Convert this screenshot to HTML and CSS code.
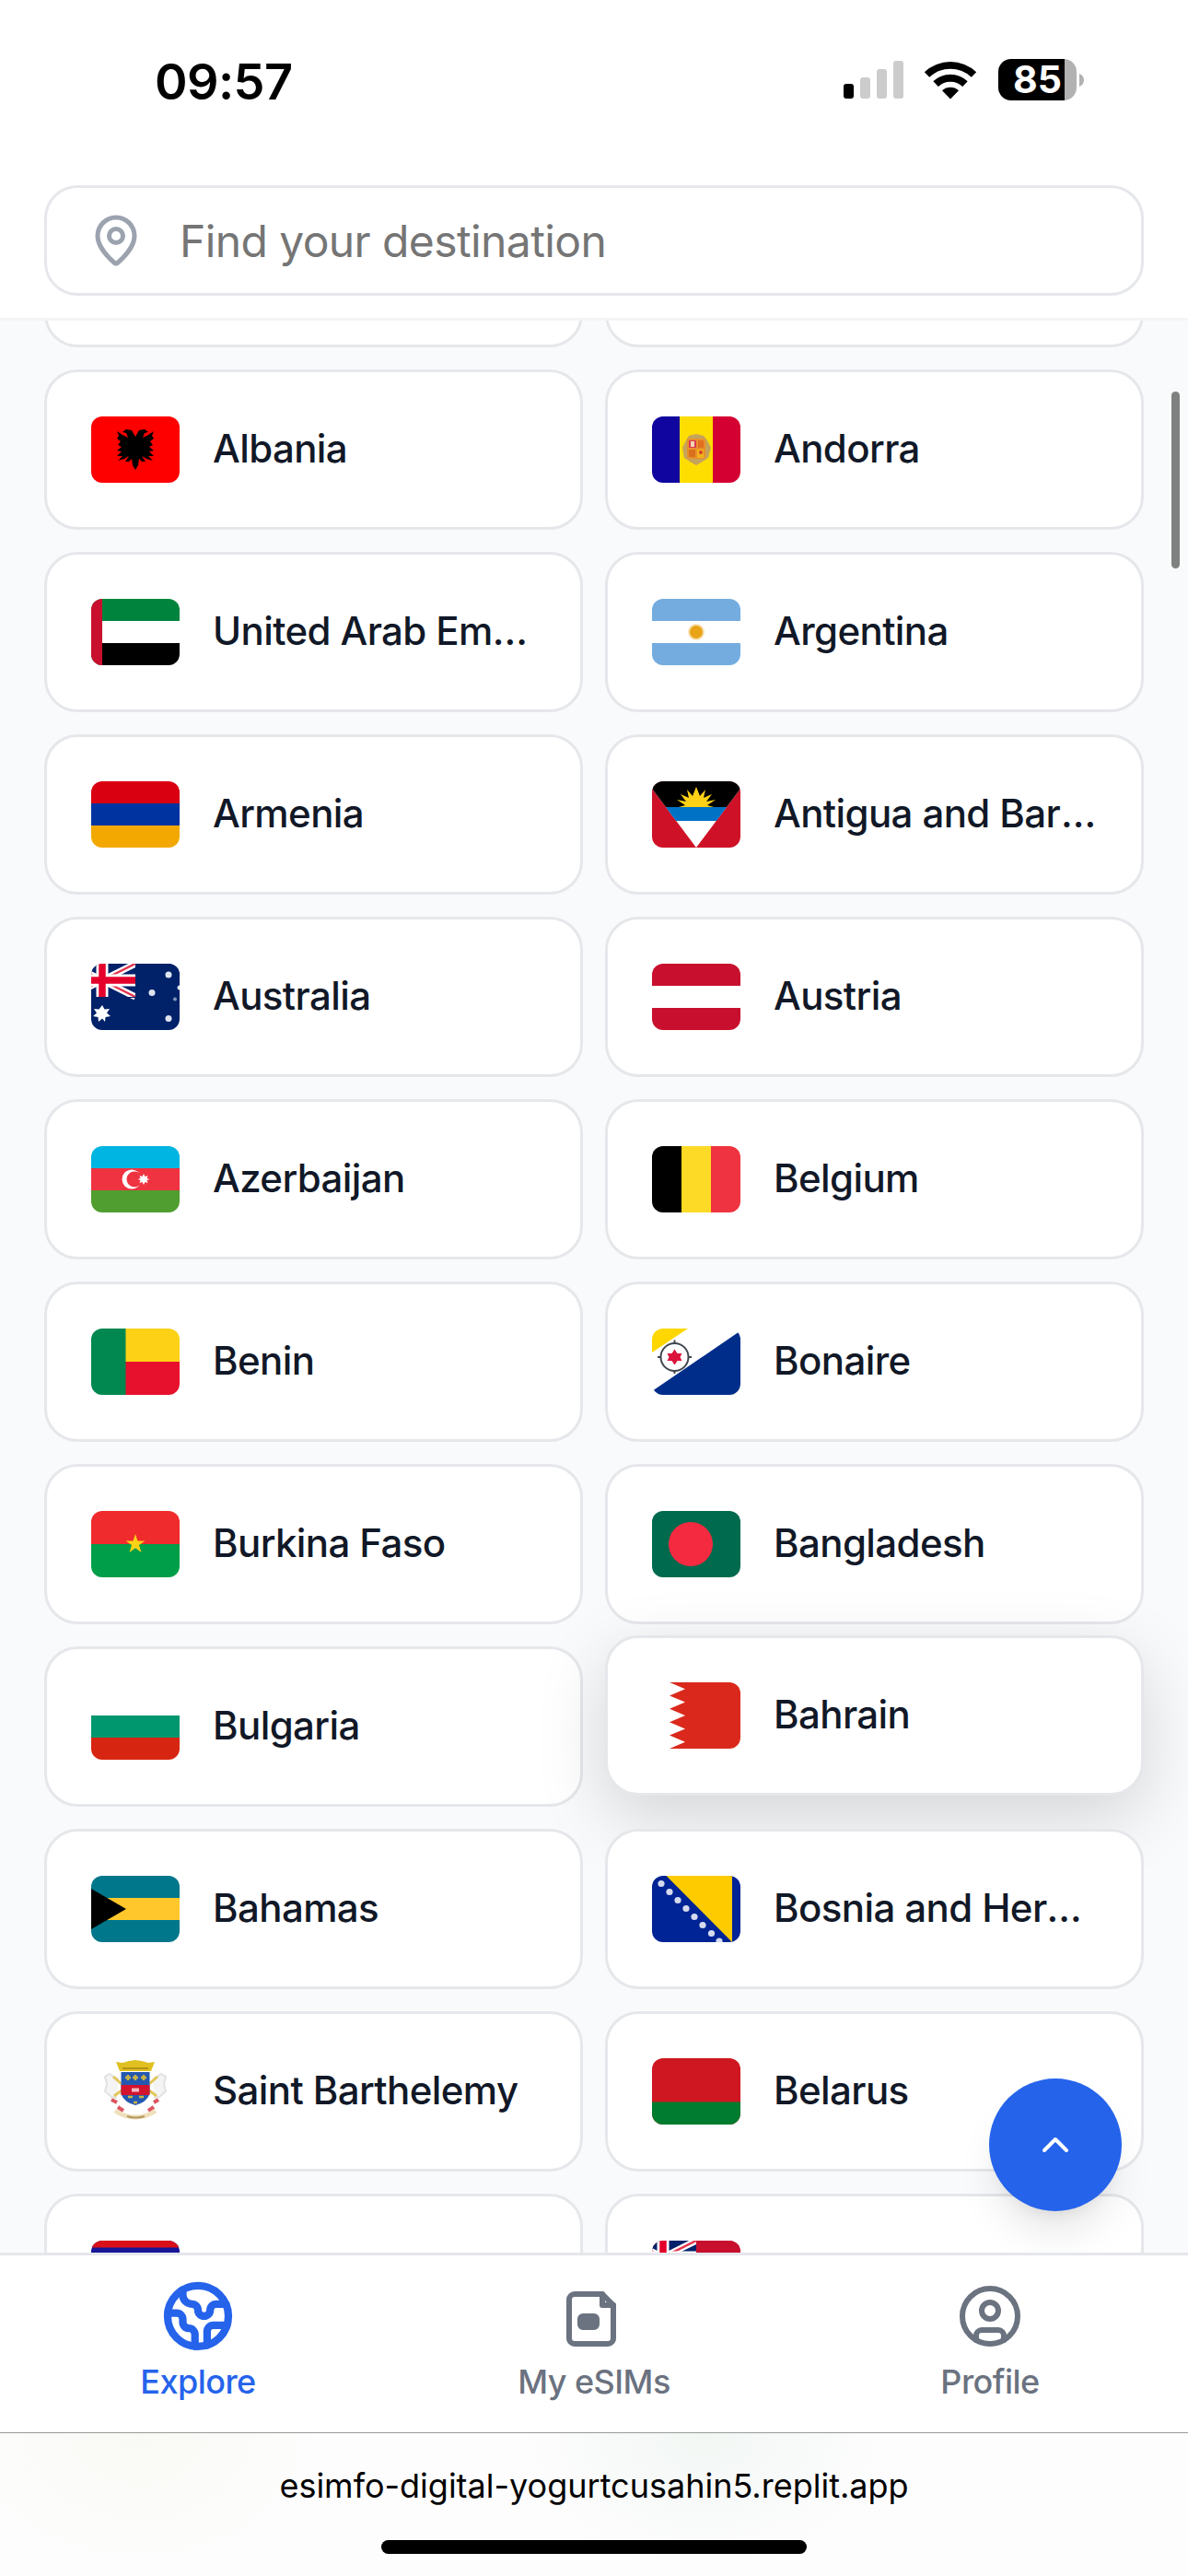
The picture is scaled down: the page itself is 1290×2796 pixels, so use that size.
FILE: index.html
```html
<!DOCTYPE html>
<html lang="en">
<head>
<meta charset="utf-8">
<title>Explore eSIM destinations</title>
<link rel="stylesheet" href="styles.css">
</head>
<body>
<div class="screen">
  <div class="status-bar">
    <span class="clock">09:57</span>
    <div class="status-icons">
      <svg class="signal" viewBox="0 0 65 41"><rect x="0" y="25" width="11" height="16" rx="3" fill="#000"/><rect x="18" y="18" width="11" height="23" rx="3" fill="#ccc"/><rect x="36" y="9" width="11" height="32" rx="3" fill="#ccc"/><rect x="54" y="0" width="11" height="41" rx="3" fill="#ccc"/></svg>
      <svg class="wifi" viewBox="0 0 58 42"><path d="M0.8 12.3A41 41 0 0 1 57.2 12.3L51.8 17.8A33 33 0 0 0 6.2 17.8Z"/><path d="M10.3 22.3A27 27 0 0 1 47.7 22.3L42.2 27.9A19.5 19.5 0 0 0 15.8 27.9Z"/><path d="M20 32.3A13.5 13.5 0 0 1 38 32.3L29 41.5Z"/></svg>
      <div class="battery"><span class="battery-level">85</span></div>
      <svg class="battery-nub" viewBox="0 0 5 14"><path d="M0 0Q5 2 5 7T0 14Z" fill="#b2b2b2"/></svg>
    </div>
  </div>
  <header class="search-header">
    <div class="search">
      <svg class="pin" viewBox="0 0 24 24"><path d="M20 10c0 4.993-5.539 10.193-7.399 11.799a1 1 0 0 1-1.202 0C9.539 20.193 4 14.993 4 10a8 8 0 0 1 16 0"/><circle cx="12" cy="10" r="3"/></svg>
      <span class="placeholder">Find your destination</span>
    </div>
  </header>

  <main class="content">
    <div class="grid">
      <div class="card"></div>
      <div class="card"></div>

      <div class="card"><svg class="flag" viewBox="0 0 96 72"><rect width="96" height="72" fill="#f00"/><path d="M48 22L44 15 38 14 34 17 38 18 40 23 34 20 28 16 30 21 28 24 32 27 29 31 33 33 28 37 33 38 28 43 34 43 29 48 36 46 41 43 37 49 41 49 44 46 45 53 48 58 51 53 52 46 55 49 59 49 55 43 60 46 67 48 62 43 68 43 63 38 68 37 63 33 67 31 64 27 68 24 66 21 68 16 62 20 56 23 58 18 62 17 58 14 52 15Z"/></svg><span class="name">Albania</span></div>
      <div class="card"><svg class="flag" viewBox="0 0 96 72"><rect width="30" height="72" fill="#10069f"/><rect x="30" width="36" height="72" fill="#fedd00"/><rect x="66" width="30" height="72" fill="#d50032"/><path d="M37 26L40 21 48 19 56 21 60 26 64 34 61 45 55 49 48 53 41 49 35 45 33 34Z" fill="#c6a35a"/><rect x="38" y="24" width="20" height="22" rx="3" fill="#e8902a"/><rect x="40" y="26" width="8" height="8" fill="#d83a55"/><rect x="42" y="27" width="4" height="6" fill="#f5d5b0"/><rect x="50" y="26" width="6" height="8" fill="#e07020"/><rect x="40" y="36" width="7" height="8" fill="#d9701d"/><rect x="49" y="36" width="7" height="9" fill="#f2b21c"/><circle cx="53" cy="39" r="2" fill="#d7402e"/></svg><span class="name">Andorra</span></div>

      <div class="card"><svg class="flag" viewBox="0 0 96 72"><rect width="96" height="72" fill="#fff"/><rect width="96" height="24" fill="#00843d"/><rect y="48" width="96" height="24"/><rect width="12" height="72" fill="#c8102e"/></svg><span class="name">United Arab Emirates</span></div>
      <div class="card"><svg class="flag" viewBox="0 0 96 72"><rect width="96" height="72" fill="#74acdf"/><rect y="24" width="96" height="24" fill="#fff"/><circle cx="48" cy="36" r="9" fill="#f8dfae"/><circle cx="48" cy="36" r="7" fill="#e8a317"/></svg><span class="name">Argentina</span></div>

      <div class="card"><svg class="flag" viewBox="0 0 96 72"><rect width="96" height="24" fill="#d90012"/><rect y="24" width="96" height="24" fill="#0033a0"/><rect y="48" width="96" height="24" fill="#f2a800"/></svg><span class="name">Armenia</span></div>
      <div class="card"><svg class="flag" viewBox="0 0 96 72"><rect width="96" height="72" fill="#ce1126"/><path d="M0 0H96V8L48 72 0 8Z" fill="#fff"/><path d="M0 0H96V8L81 28H15L0 8Z"/><path d="M15 28H81L70 43H26Z" fill="#0072c6"/><path d="M29 28L36 26 27 20 37 22 31 14 40 18 38 9 44 16 48 6 52 16 58 9 56 18 65 14 59 22 69 20 60 26 67 28Z" fill="#fcd116"/></svg><span class="name">Antigua and Barbuda</span></div>

      <div class="card"><svg class="flag" viewBox="0 0 96 72"><rect width="96" height="72" fill="#012169"/><g id="jack"><path d="M-24 0L48 36M48 0L-24 36" stroke="#fff" stroke-width="7"/><path d="M12 18L48 36M12 18L48 0M12 18L-24 0M12 18L-24 36" stroke="#e4344f" stroke-width="2.5"/><path d="M12 0V36M0 18H48" stroke="#fff" stroke-width="13"/><path d="M12 0V36M0 18H48" stroke="#e4002b" stroke-width="7.5"/></g><rect x="48" width="48" height="37" fill="#012169"/><path d="M-12 36.5H48" stroke="#012169" stroke-width="1"/><path d="M12 45l2.5 4.500 5.500-.5-3 4.500 4 3.500-5.500 1-.5 5-3-3.500-4 3.500-.5-5-5.500-1 4-3.500-3-4.500 5.500.5z" fill="#fff"/><g fill="#dfe4ef"><circle cx="84" cy="12" r="3.500"/><circle cx="66" cy="31.500" r="3.500"/><circle cx="84" cy="59.500" r="3.500"/><circle cx="96" cy="26" r="2.500"/><circle cx="91" cy="38.500" r="2" opacity=".6"/></g></svg><span class="name">Australia</span></div>
      <div class="card"><svg class="flag" viewBox="0 0 96 72"><rect width="96" height="72" fill="#c8102e"/><rect y="24" width="96" height="24" fill="#fff"/></svg><span class="name">Austria</span></div>

      <div class="card"><svg class="flag" viewBox="0 0 96 72"><rect width="96" height="24" fill="#00b5e2"/><rect y="24" width="96" height="24" fill="#ef3340"/><rect y="48" width="96" height="24" fill="#509e2f"/><circle cx="44" cy="36" r="10.500" fill="#fff"/><circle cx="47" cy="36" r="8.500" fill="#ef3340"/><path d="M57 30l1.500 3 3-1-1 3 3 1-3 1 1 3-3-1-1.500 3-1.500-3-3 1 1-3-3-1 3-1-1-3 3 1z" fill="#fff"/></svg><span class="name">Azerbaijan</span></div>
      <div class="card"><svg class="flag" viewBox="0 0 96 72"><rect width="32" height="72"/><rect x="32" width="32" height="72" fill="#fdda25"/><rect x="64" width="32" height="72" fill="#ef3340"/></svg><span class="name">Belgium</span></div>

      <div class="card"><svg class="flag" viewBox="0 0 96 72"><rect width="38" height="72" fill="#008850"/><rect x="37.500" width="59" height="36" fill="#fcd116"/><rect x="37.500" y="36" width="59" height="36" fill="#e8112d"/></svg><span class="name">Benin</span></div>
      <div class="card"><svg class="flag" viewBox="0 0 96 72"><rect width="96" height="72" fill="#fff"/><path d="M0 0H39L0 26Z" fill="#ffd700"/><path d="M96 2.500V72H0V68Z" fill="#012d8a"/><circle cx="24.500" cy="31" r="15" fill="#fff" stroke="#40464f" stroke-width="2"/><path d="M24.500 12.500v3M24.500 46v3M6 31h3M40 31h3" stroke="#40464f" stroke-width="2"/><path d="M24.500 22.500l3 4.500h5l-2 4 2 4h-5l-3 4.500-3-4.500h-5l2-4-2-4h5z" fill="#dc143c"/></svg><span class="name">Bonaire</span></div>

      <div class="card"><svg class="flag" viewBox="0 0 96 72"><rect width="96" height="36" fill="#ef2b2d"/><rect y="36" width="96" height="36" fill="#009e49"/><path d="M48 25l2.500 7.500H58.500l-6.500 4.500 2.500 8-6.500-4.800-6.500 4.800 2.500-8-6.500-4.500h8z" fill="#fcd116"/></svg><span class="name">Burkina Faso</span></div>
      <div class="card"><svg class="flag" viewBox="0 0 96 72"><rect width="96" height="72" fill="#006a4e"/><circle cx="42" cy="36" r="24" fill="#f42a41"/></svg><span class="name">Bangladesh</span></div>

      <div class="card"><svg class="flag" viewBox="0 0 96 72"><rect width="96" height="72" fill="#fff"/><rect y="24" width="96" height="24" fill="#00966e"/><rect y="48" width="96" height="24" fill="#d62612"/></svg><span class="name">Bulgaria</span></div>
      <div class="card card-raised"><svg class="flag" viewBox="0 0 96 72"><rect width="96" height="72" fill="#fff"/><path d="M96 0H19L36 7.200 19 14.400 36 21.600 19 28.800 36 36 19 43.200 36 50.400 19 57.600 36 64.800 19 72H96Z" fill="#da291c"/></svg><span class="name">Bahrain</span></div>

      <div class="card"><svg class="flag" viewBox="0 0 96 72"><rect width="96" height="72" fill="#00778b"/><rect y="24" width="96" height="24" fill="#ffc72c"/><path d="M0 14L38 36 0 58Z"/></svg><span class="name">Bahamas</span></div>
      <div class="card"><svg class="flag" viewBox="0 0 96 72"><rect width="96" height="72" fill="#002395"/><path d="M15.500 0H87V72Z" fill="#fecb00"/><g fill="#d5dbee"><circle cx="10" cy="8.500" r="3.600"/><circle cx="19" cy="17.500" r="3.600"/><circle cx="28" cy="26.500" r="3.600"/><circle cx="37" cy="35.500" r="3.600"/><circle cx="46" cy="44.500" r="3.600"/><circle cx="55" cy="53.500" r="3.600"/><circle cx="64.500" cy="62.500" r="3.600"/><circle cx="73" cy="71" r="3.600"/></g></svg><span class="name">Bosnia and Herzegovina</span></div>

      <div class="card"><svg class="flag" viewBox="0 0 96 72"><rect width="96" height="72" fill="#fff"/><path d="M30 23L20 17 15 20 17 28 15 36 22 42 28 43M67 23L76 17 81 20 79 28 81 36 74 42 68 43" fill="#f4f4f4" stroke="#e2e2e2" stroke-width="2"/><path d="M24 20l9 8M25 41l8-6M72 20l-9 8M71 41l-8-6" stroke="#e3c65a" stroke-width="3"/><path d="M27 4L34 5 41 3 48 2 55 3 62 5 69 4 65 14H31Z" fill="#dfc020"/><path d="M34 11H62" stroke="#b59214" stroke-width="2"/><path d="M32.500 15H63.500V39Q60 48 48 51 36 48 32.500 39Z" fill="#2458b0"/><rect x="32.500" y="29" width="31" height="11" fill="#d3122e"/><path d="M44 34.500h8" stroke="#f5b9c2" stroke-width="4"/><path d="M40 18v6M37 21h6M48 18v6M45 21h6M57 18v6M54 21h6M40 42h5M52 42h5M46 48h4" stroke="#c9b545" stroke-width="2.500"/><path d="M22 45l6 3M73 45l-5 3M29 53l6 4M68 53l-6 4" stroke="#dc5560" stroke-width="4"/><path d="M26 57Q36 64 48 64T70 57" fill="none" stroke="#efe0bd" stroke-width="5"/><path d="M39 63Q48 66 58 63" fill="none" stroke="#b39a62" stroke-width="2"/></svg><span class="name">Saint Barthelemy</span></div>
      <div class="card"><svg class="flag" viewBox="0 0 96 72"><rect width="96" height="72" fill="#ce1720"/><rect y="47.500" width="96" height="25" fill="#007c30"/></svg><span class="name">Belarus</span></div>

      <div class="card"><svg class="flag" viewBox="0 0 96 72"><rect width="96" height="72" fill="#171696"/><rect width="96" height="7.500" fill="#d90f19"/></svg></div>
      <div class="card"><svg class="flag" viewBox="0 0 96 72"><rect width="96" height="72" fill="#c8102e"/><rect width="48" height="36" fill="#012169"/><use href="#jack"/><rect x="48" width="48" height="37" fill="#c8102e"/></svg></div>
    </div>
    <div class="scroll-thumb"></div>
    <button class="to-top" aria-label="Back to top"><svg viewBox="0 0 24 24"><path d="m18 15-6-6-6 6"/></svg></button>
  </main>

  <nav class="tabs">
    <a class="tab tab-active"><svg viewBox="0 0 24 24"><path d="M21.540 15H17a2 2 0 0 0-2 2v4.540"/><path d="M7 3.340V5a3 3 0 0 0 3 3a2 2 0 0 1 2 2c0 1.100.9 2 2 2a2 2 0 0 0 2-2c0-1.100.9-2 2-2h3.170"/><path d="M11 21.950V18a2 2 0 0 0-2-2a2 2 0 0 1-2-2v-1a2 2 0 0 0-2-2H2.050"/><circle cx="12" cy="12" r="10"/></svg><span>Explore</span></a>
    <a class="tab"><svg viewBox="0 0 24 24"><path d="M15 4H5a2 2 0 0 0-2 2v14a2 2 0 0 0 2 2h12a2 2 0 0 0 2-2V8z"/><path d="M15 4v4h4"/><rect x="7" y="12" width="6" height="4" rx="1" fill="currentColor"/></svg><span>My eSIMs</span></a>
    <a class="tab"><svg viewBox="0 0 24 24"><circle cx="12" cy="12" r="10"/><circle cx="12" cy="10" r="3"/><path d="M7 20.662V19a2 2 0 0 1 2-2h6a2 2 0 0 1 2 2v1.662"/></svg><span>Profile</span></a>
  </nav>

  <footer class="browser-bar">
    <span class="url">esimfo-digital-yogurtcusahin5.replit.app</span>
    <div class="home-indicator"></div>
  </footer>
</div>
</body>
</html>
```
FILE: styles.css
```css
* { box-sizing: border-box; }

body {
  margin: 0;
  font-family: Inter, "Liberation Sans", sans-serif;
  background: #fff;
}

.screen {
  width: 1290px;
  height: 2796px;
  display: flex;
  flex-direction: column;
  overflow: hidden;
}

/* Status bar */
.status-bar {
  height: 177px;
  flex: none;
  display: flex;
  justify-content: space-between;
  padding: 64px 113px 0 168px;
}

.clock {
  font-size: 54px;
  font-weight: 600;
  line-height: 49px;
  letter-spacing: -0.6px;
}

.status-icons {
  display: flex;
  align-items: center;
  height: 45px;
}

.signal { width: 65px; height: 41px; }
.wifi { width: 58px; height: 42px; margin-left: 22px; }

.battery {
  width: 85px;
  height: 45px;
  margin-left: 23px;
  border-radius: 14px;
  background: linear-gradient(90deg, #000 72px, #b2b2b2 72px);
  display: flex;
  align-items: center;
  padding-left: 16px;
}

.battery-level {
  color: #fff;
  font-size: 41px;
  font-weight: 700;
  line-height: 45px;
}

.battery-nub { width: 5px; height: 14px; margin-left: 3px; }

/* Search */
.search-header {
  height: 171px;
  flex: none;
  padding: 24px 48px;
  border-bottom: 3px solid #f3f4f6;
}

.search {
  height: 120px;
  display: flex;
  align-items: center;
  gap: 39px;
  padding-left: 45px;
  border: 3px solid #e5e7eb;
  border-radius: 36px;
}

.pin {
  width: 60px;
  height: 60px;
  fill: none;
  stroke: #9ca3af;
  stroke-width: 2;
  stroke-linecap: round;
  stroke-linejoin: round;
}

.placeholder {
  font-size: 48px;
  letter-spacing: -0.6px;
  color: #757575;
}

/* Country grid */
.content {
  position: relative;
  flex: 1;
  min-height: 0;
  overflow: hidden;
  background: #f9fafb;
}

.grid {
  display: grid;
  grid-template-columns: 1fr 1fr;
  gap: 24px;
  margin: -145px 48px 0;
}

.card {
  position: relative;
  height: 174px;
  min-width: 0;
  display: flex;
  align-items: center;
  gap: 36px;
  padding: 48px;
  background: #fff;
  border: 3px solid #e5e7eb;
  border-radius: 36px;
}

.card-raised {
  transform: translateY(-12px);
  box-shadow: 0 24px 75px rgba(0, 0, 0, 0.15);
}

.flag {
  width: 96px;
  height: 72px;
  flex: none;
  border-radius: 12px;
}

.name {
  min-width: 0;
  margin-bottom: 2px;
  overflow: hidden;
  text-overflow: ellipsis;
  white-space: nowrap;
  font-size: 42px;
  font-weight: 500;
  line-height: 60px;
  letter-spacing: -0.6px;
  color: #111827;
}

.scroll-thumb {
  position: absolute;
  top: 77px;
  right: 9px;
  width: 9px;
  height: 192px;
  border-radius: 5px;
  background: #7f8080;
}

.to-top {
  position: absolute;
  right: 72px;
  bottom: 45px;
  width: 144px;
  height: 144px;
  display: grid;
  place-items: center;
  padding: 0;
  border: 0;
  border-radius: 50%;
  background: #2563eb;
  box-shadow: 0 30px 45px -9px rgba(0, 0, 0, 0.1), 0 12px 18px -12px rgba(0, 0, 0, 0.1);
}

.to-top svg {
  width: 48px;
  height: 48px;
  fill: none;
  stroke: #fff;
  stroke-width: 2;
  stroke-linecap: round;
  stroke-linejoin: round;
}

/* Tab bar */
.tabs {
  height: 195px;
  flex: none;
  display: grid;
  grid-template-columns: repeat(3, 1fr);
  padding: 30px 0 0;
  border-top: 3px solid #e5e7eb;
  background: #fff;
}

.tab {
  display: flex;
  flex-direction: column;
  align-items: center;
  gap: 11px;
  color: #6b7280;
  font-size: 36px;
  font-weight: 500;
  line-height: 48px;
  letter-spacing: -0.55px;
}

.tab svg {
  width: 72px;
  height: 72px;
  fill: none;
  stroke: currentColor;
  stroke-width: 2;
  stroke-linecap: round;
  stroke-linejoin: round;
}

.tab-active { color: #2563eb; }
.tab-active svg { transform: scale(1.1); stroke-width: 2.5; }

/* Browser address bar */
.browser-bar {
  height: 156px;
  flex: none;
  display: flex;
  flex-direction: column;
  align-items: center;
  border-top: 1px solid #999;
  background:
    radial-gradient(ellipse 200px 150px at 150px 0, #f9f9f5, transparent),
    radial-gradient(ellipse 200px 150px at 765px 0, #f2f7f4, transparent),
    #fdfdfd;
}

.url {
  margin-top: 33px;
  font-size: 36px;
  line-height: 48px;
  color: #000;
}

.home-indicator {
  width: 462px;
  height: 15px;
  margin-top: 35px;
  border-radius: 8px;
  background: #000;
}
```
